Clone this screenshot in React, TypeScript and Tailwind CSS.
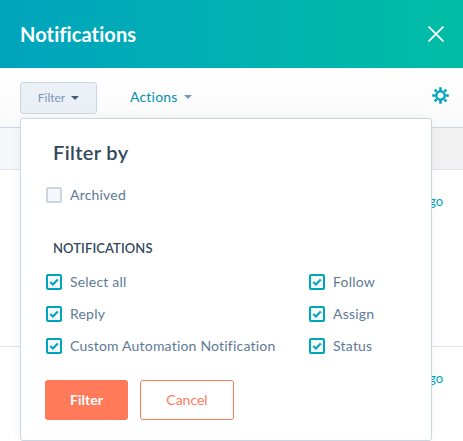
import React from "react";

const Check = ({ checked }: { checked: boolean }) =>
  checked ? (
    <span className="flex h-4 w-4 shrink-0 items-center justify-center rounded-[2px] border-2 border-[#00a4bd] bg-[#f5f8fa]">
      <svg viewBox="0 0 12 12" className="h-[10px] w-[10px]" fill="none" stroke="#00a4bd" strokeWidth="2.4">
        <path d="M1.5 6 L4.7 9 L10.5 3" />
      </svg>
    </span>
  ) : (
    <span className="h-4 w-4 shrink-0 rounded-[2px] border-2 border-[#cbd6e2] bg-[#f5f8fa]" />
  );

const Option = ({ label, checked = true }: { label: string; checked?: boolean }) => (
  <div className="flex h-4 items-center gap-2">
    <Check checked={checked} />
    <span className="text-sm leading-4 tracking-[0.2px] text-[#5e7a96]">{label}</span>
  </div>
);

const Caret = ({ color }: { color: string }) => (
  <svg viewBox="0 0 8 4" className="h-1 w-2" fill={color}>
    <path d="M0 0 H8 L4 4 Z" />
  </svg>
);

const Gear = () => (
  <svg viewBox="0 0 17 17" className="h-[17px] w-[17px]" fill="none" stroke="#00a4bd">
    <circle cx="8.5" cy="8.5" r="4.2" strokeWidth="2.4" />
    <path
      strokeWidth="2.6"
      d="M8.5 .2 V3.4 M8.5 13.6 V16.8 M.2 8.5 H3.4 M13.6 8.5 H16.8 M2.7 2.7 L4.6 4.6 M12.4 12.4 L14.3 14.3 M2.7 14.3 L4.6 12.4 M12.4 4.6 L14.3 2.7"
    />
  </svg>
);

export default function App() {
  return (
    <div className="relative h-[441px] w-[463px] overflow-hidden bg-white font-['Lato',sans-serif]">
      <div className="flex h-[68px] items-center justify-between bg-gradient-to-r from-[#00a4bd] to-[#00bda5] pl-5 pr-[19px]">
        <h1 className="text-xl font-bold tracking-[0.1px] text-white">Notifications</h1>
        <svg viewBox="0 0 16 16" className="h-4 w-4" stroke="white" strokeWidth="1.7">
          <path d="M.5 .5 L15.5 15.5 M15.5 .5 L.5 15.5" />
        </svg>
      </div>

      <div className="flex h-[60px] items-start border-b border-[#cbd6e2] bg-gradient-to-b from-white to-[#fafafa] pl-5 pt-[14px]">
        <button className="flex h-8 w-[77px] items-center justify-center gap-[6px] rounded-[3px] border border-[#cbd6e2] bg-[#eaf0f6] text-xs text-[#7c98b6]">
          Filter
          <Caret color="#425b76" />
        </button>
        <button className="-mt-[1px] ml-[33px] flex h-8 items-center gap-[6px] text-sm tracking-[0.2px] text-[#0091ae]">
          Actions
          <Caret color="#7c98b6" />
        </button>
        <div className="ml-auto mr-[14px] mt-[5px]">
          <Gear />
        </div>
      </div>

      <div className="h-[42px] border-b border-[#dfe3eb] bg-gradient-to-r from-[#f5f8fa] to-[#f1f1f1]" />

      <div className="flex h-[177px] justify-end border-b border-[#dfe3eb] pr-5 pt-[23px]">
        <span className="text-[13px] leading-4 text-[#00a4bd]">2 days ago</span>
      </div>
      <div className="flex justify-end pr-5 pt-[23px]">
        <span className="text-[13px] leading-4 text-[#00a4bd]">3 days ago</span>
      </div>

      <div className="absolute left-5 top-[118px] h-[323px] w-[412px] rounded-[3px] border border-[#cbd6e2] bg-white pl-[25px] shadow-[0_0_12px_rgba(0,0,0,0.05)]">
        <h2 className="ml-[7px] mt-[21px] text-xl font-semibold leading-6 tracking-[0.35px] text-[#33475b]">Filter by</h2>
        <div className="mt-[23px]">
          <Option label="Archived" checked={false} />
        </div>
        <h3 className="ml-[7px] mt-[35px] text-[13px] font-semibold leading-5 tracking-[0.1px] text-[#33475b]">NOTIFICATIONS</h3>
        <div className="mt-[16px] flex w-[329px] justify-between">
          <div className="flex flex-col gap-4">
            <Option label="Select all" />
            <Option label="Reply" />
            <Option label="Custom Automation Notification" />
          </div>
          <div className="flex flex-col gap-4">
            <Option label="Follow" />
            <Option label="Assign" />
            <Option label="Status" />
          </div>
        </div>
        <div className="-ml-[1px] mt-[26px] flex gap-[12px]">
          <button className="h-10 w-[83px] rounded-[3px] bg-[#ff7a59] text-sm font-bold text-white">Filter</button>
          <button className="h-10 w-[94px] rounded-[3px] border border-[#ff7a59] bg-white text-sm text-[#ff7a59]">Cancel</button>
        </div>
      </div>
    </div>
  );
}
